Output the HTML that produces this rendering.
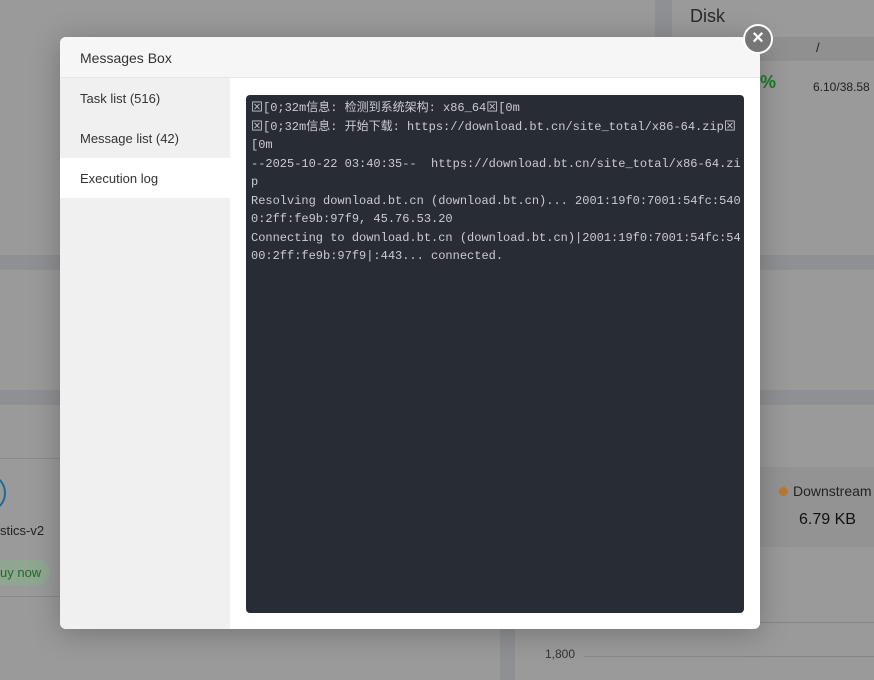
<!DOCTYPE html>
<html><head><meta charset="utf-8"><style>
*{box-sizing:border-box;margin:0;padding:0}
body{width:874px;height:680px;overflow:hidden;background:#8f9093;font-family:"Liberation Sans","Noto Sans CJK SC",sans-serif;position:relative}
.c{position:absolute;background:#9a9a9a}
.modal{position:absolute;left:60px;top:37px;width:700px;height:592px;background:#fff;border-radius:6px;overflow:hidden;box-shadow:0 4px 30px rgba(0,0,0,.25)}
.hd{height:41px;background:#f5f6f5;border-bottom:1px solid #e6e6e6;font-size:14px;color:#333;padding:13px 20px 0}
.side{position:absolute;left:0;top:41px;width:170px;bottom:0;background:#f0f0f0}
.tab{height:40px;padding:13px 20px 0;font-size:13px;color:#333}
.tab.a{background:#fff}
.log{position:absolute;left:186px;top:58px;width:498px;height:518px;background:#282c34;border-radius:4px;padding:4px 3px 4px 5px;color:#c9ccd1;font:12px/18.5px "Liberation Mono","Noto Sans CJK SC",monospace;white-space:pre-wrap;word-break:break-all}
.x{position:absolute;left:743px;top:24px;width:30px;height:30px;border-radius:50%;background:#777;border:2.5px solid #fff;color:#fff;font-size:20px;line-height:24px;text-align:center;font-weight:bold}
</style></head><body>
<div class="c" style="left:0;top:0;width:655px;height:255px"></div>
<div class="c" style="left:672px;top:0;width:202px;height:255px"></div>
<div style="position:absolute;left:690px;top:6px;font-size:18px;color:#2a2a2a">Disk</div>
<div style="position:absolute;left:672px;top:37px;width:202px;height:24px;background:#909090"></div>
<div style="position:absolute;left:816px;top:40px;font-size:13px;color:#222">/</div>
<div style="position:absolute;left:760px;top:72px;font-size:18px;color:#1a7a2a;font-weight:bold">%</div>
<div style="position:absolute;left:813px;top:80px;font-size:12px;color:#222">6.10/38.58</div>
<div class="c" style="left:0;top:270px;width:874px;height:120px"></div>
<div class="c" style="left:0;top:405px;width:500px;height:275px"></div>
<div class="c" style="left:515px;top:405px;width:359px;height:275px"></div>
<div style="position:absolute;left:0;top:458px;width:60px;height:1px;background:#8a8a8a"></div>
<div style="position:absolute;left:0;top:596px;width:60px;height:1px;background:#8a8a8a"></div>
<div style="position:absolute;left:-22px;top:476px;width:28px;height:34px;border:2px solid #1f6a94;border-radius:50%"></div>
<div style="position:absolute;left:0;top:523px;font-size:13px;color:#222">stics-v2</div>
<div style="position:absolute;left:-20px;top:560px;width:70px;height:25px;border-radius:12px;background:#8fa790;color:#1f6b2a;font-size:13px;padding:5px 0 0 20px">uy now</div>
<div style="position:absolute;left:760px;top:467px;width:114px;height:80px;background:#939393"></div>
<div style="position:absolute;left:779px;top:487px;width:9px;height:9px;border-radius:50%;background:#b9782e"></div>
<div style="position:absolute;left:793px;top:483px;font-size:14px;color:#222">Downstream</div>
<div style="position:absolute;left:799px;top:511px;font-size:16px;color:#111">6.79 KB</div>
<div style="position:absolute;left:760px;top:622px;width:114px;height:1px;background:#858585"></div>
<div style="position:absolute;left:545px;top:647px;font-size:12px;color:#333">1,800</div>
<div style="position:absolute;left:584px;top:656px;width:290px;height:1px;background:#858585"></div>
<div class="modal">
<div class="hd">Messages Box</div>
<div class="side"><div class="tab">Task list (516)</div><div class="tab">Message list (42)</div><div class="tab a">Execution log</div></div>
<div class="log">⊠[0;32m信息: 检测到系统架构: x86_64⊠[0m
⊠[0;32m信息: 开始下载: https://download.bt.cn/site_total/x86-64.zip⊠[0m
--2025-10-22 03:40:35--  https://download.bt.cn/site_total/x86-64.zip
Resolving download.bt.cn (download.bt.cn)... 2001:19f0:7001:54fc:5400:2ff:fe9b:97f9, 45.76.53.20
Connecting to download.bt.cn (download.bt.cn)|2001:19f0:7001:54fc:5400:2ff:fe9b:97f9|:443... connected.</div>
</div>
<div class="x">×</div>
</body></html>
